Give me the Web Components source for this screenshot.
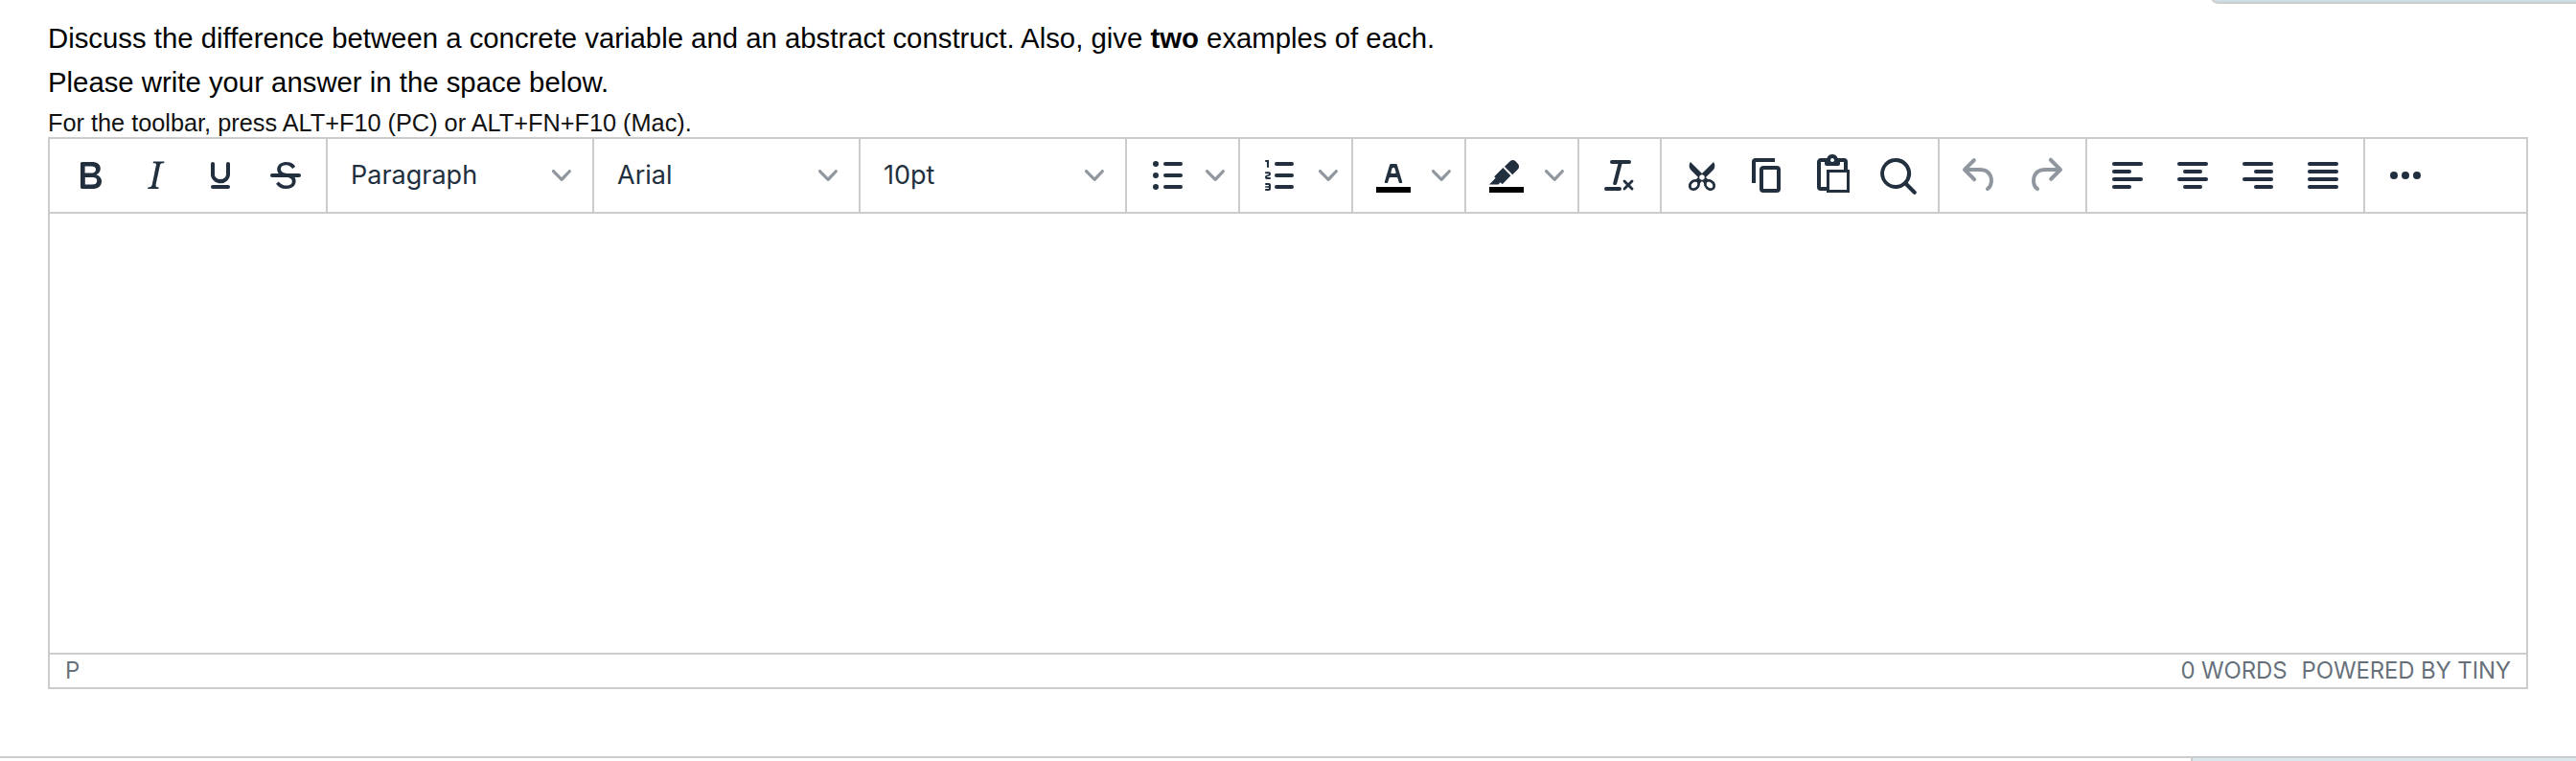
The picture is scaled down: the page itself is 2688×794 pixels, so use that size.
<!DOCTYPE html>
<html lang="en">
<head>
<meta charset="utf-8">
<title>Essay question</title>
<style>
html,body{margin:0;height:794px;overflow:hidden;background:#fff}
</style>
</head>
<body>
<question-page></question-page>
<script>
const rows = (list) => list.map(([x, y, w]) => `<rect x="${x}" y="${y}" width="${w}" height="2" rx="1"/>`).join('');
const ICONS = {
  bold: '<path d="M7.8 19c-.3 0-.5 0-.6-.2l-.2-.5V5.7c0-.2 0-.4.2-.5l.6-.2h5c1.5 0 2.7.3 3.5 1 .7.6 1.1 1.4 1.1 2.5a3 3 0 0 1-.6 1.9c-.4.6-1 1-1.6 1.2.4.1.9.3 1.3.6s.8.7 1 1.2c.4.4.5 1 .5 1.6 0 1.3-.4 2.3-1.3 3-.8.7-2.1 1-3.8 1H7.8Zm5-8.3c.6 0 1.2-.1 1.6-.5.4-.3.6-.7.6-1.3 0-1.1-.8-1.7-2.3-1.7H9.3v3.5h3.4Zm.5 6c.7 0 1.3-.1 1.7-.4.4-.4.6-.9.6-1.5s-.2-1-.7-1.4c-.4-.3-1-.4-2-.4H9.4v3.8h4Z" fill-rule="evenodd"/>',
  italic: '<path d="m16.7 4.7-.1.9h-.3c-.6 0-1 0-1.4.3-.3.3-.4.6-.5 1.1l-2.1 9.8v.6c0 .5.4.8 1.4.8h.2l-.2.8H8l.2-.8h.2c1.1 0 1.8-.5 2-1.5l2-9.8.1-.5c0-.6-.4-.8-1.4-.8h-.3l.2-.9h5.8Z"/>',
  underline: '<path d="M16 5c.6 0 1 .4 1 1v5.5a4 4 0 0 1-.4 1.8l-1 1.4a5.3 5.3 0 0 1-5.5 1 5 5 0 0 1-1.6-1c-.5-.4-.8-.9-1.1-1.4a4 4 0 0 1-.4-1.8V6c0-.6.4-1 1-1s1 .4 1 1v5.5c0 .3 0 .6.2 1l.6.7a3.3 3.3 0 0 0 2.2.8 3.4 3.4 0 0 0 2.2-.8c.3-.2.4-.5.6-.8l.2-.9V6c0-.6.4-1 1-1ZM8 17h8c.6 0 1 .4 1 1s-.4 1-1 1H8a1 1 0 0 1 0-2Z"/>',
  strike: '<path d="M15.6 8.5c-.5-.7-1-1.1-1.3-1.3-.6-.4-1.3-.6-2-.6-2.7 0-2.8 1.7-2.8 2.1 0 1.6 1.8 2 3.2 2.3 4.4.9 4.6 2.8 4.6 3.9 0 1.4-.7 4.1-5 4.1A6.2 6.2 0 0 1 7 16.4l1.5-1.1c.4.6 1.6 2 3.7 2 1.6 0 2.5-.4 3-1.2.4-.8.3-2-.8-2.6-.7-.4-1.6-.7-2.9-1-1-.2-3.9-.8-3.9-3.6C7.6 6 10.3 5 12.4 5c2.9 0 4.2 1.6 4.7 2.4l-1.5 1.1Z"/><path d="M5 11h14a1 1 0 0 1 0 2H5a1 1 0 0 1 0-2Z"/>',
  bullets: rows([[10,5,10],[10,11,10],[10,17,10]]) + '<circle cx="6" cy="6" r="1.5"/><circle cx="6" cy="12" r="1.5"/><circle cx="6" cy="18" r="1.5"/>',
  numbers: rows([[9,5,10],[9,11,10],[9,17,10]]) + '<path d="M6 4v3.5c0 .3-.2.5-.5.5a.5.5 0 0 1-.5-.5V5h-.5a.5.5 0 0 1 0-1H6Zm-1 8.8.2.2h1.3c.3 0 .5.2.5.5s-.2.5-.5.5H4.9a1 1 0 0 1-.9-1V13c0-.4.3-.8.6-1l1.2-.4.2-.3a.2.2 0 0 0-.2-.2H4.5a.5.5 0 0 1-.5-.5c0-.3.2-.5.5-.5h1.6c.5 0 .9.4.9 1v.1c0 .4-.3.8-.6 1l-1.2.4-.2.3ZM7 17v2c0 .6-.4 1-1 1H4.5a.5.5 0 0 1 0-1h1.2c.2 0 .3-.1.3-.3 0-.2-.1-.3-.3-.3H4.4a.4.4 0 1 1 0-.8h1.3c.2 0 .3-.1.3-.3 0-.2-.1-.3-.3-.3H4.5a.5.5 0 1 1 0-1H6c.6 0 1 .4 1 1Z"/>',
  color: '<path d="M3 18h18v3H3z" fill="#000"/><path d="M8.7 16h-.8a.5.5 0 0 1-.5-.6l2.7-9c.1-.3.3-.4.5-.4h2.8c.2 0 .4.1.5.4l2.7 9a.5.5 0 0 1-.5.6h-.8a.5.5 0 0 1-.4-.4l-.7-2.2c0-.3-.3-.4-.5-.4h-3.4c-.2 0-.4.1-.5.4l-.7 2.2c0 .3-.2.4-.4.4Zm2.6-7.6-.6 2a.5.5 0 0 0 .5.6h1.6a.5.5 0 0 0 .5-.6l-.6-2c0-.3-.3-.4-.5-.4h-.4c-.2 0-.4.1-.5.4Z" fill-rule="evenodd"/>',
  highlight: '<path d="M3 18h18v3H3z" fill="#000"/><path d="M7.7 16.7H3l3.3-3.3-.7-.8L10.2 8l4 4.1-4 4.2c-.2.2-.6.2-.8 0l-.6-.7-1.1 1.1Zm5-7.5L11 7.4l3-2.9a2 2 0 0 1 2.6 0L18 6c.7.7.7 2 0 2.7l-2.9 2.9-1.8-1.8-.5-.6Z"/>',
  clear: '<path d="M13.2 6a1 1 0 0 1 0 .2l-2.6 10a1 1 0 0 1-1 .8h-.2a.8.8 0 0 1-.8-1l2.6-10H8a1 1 0 1 1 0-2h9a1 1 0 0 1 0 2h-3.8ZM5 18h7a1 1 0 0 1 0 2H5a1 1 0 0 1 0-2Zm13 1.5L16.5 18 15 19.5a.7.7 0 0 1-1-1l1.5-1.5-1.5-1.5a.7.7 0 0 1 1-1l1.5 1.5 1.5-1.5a.7.7 0 0 1 1 1L17.5 17l1.5 1.5a.7.7 0 0 1-1 1Z"/>',
  cut: '<path fill-rule="evenodd" d="M18 15c.6.7 1 1.4 1 2.3 0 .8-.2 1.5-.7 2l-.8.5-1 .2c-.4 0-.8 0-1.2-.3a3.9 3.9 0 0 1-2.1-2.2c-.2-.5-.3-1-.2-1.5l-1-1-1 1c0 .5 0 1-.2 1.5-.1.5-.4 1-.9 1.4-.3.4-.7.6-1.2.8l-1.2.3c-.4 0-.7 0-1-.2-.3 0-.6-.3-.8-.5-.5-.5-.8-1.2-.7-2 0-.9.4-1.6 1-2.2A3.7 3.7 0 0 1 8.6 14H9l1-1-4-4-.5-1a3.3 3.3 0 0 1 0-2c0-.4.3-.7.5-1l6 6 6-6 .5 1a3.3 3.3 0 0 1 0 2c0 .4-.3.7-.5 1l-4 4 1 1h.5c.4 0 .8 0 1.2.3.5.2.9.4 1.2.8Zm-8.5 2.2.1-.4v-.7a1 1 0 0 0-.2-.5 1 1 0 0 0-.4-.2 1.6 1.6 0 0 0-.8 0 2.6 2.6 0 0 0-.8.3 2.5 2.5 0 0 0-.9 1.1l-.1.4v.7l.2.5.5.2h.7a2.5 2.5 0 0 0 .8-.3 2.8 2.8 0 0 0 .9-1.1Zm2.5-2.8c.4 0 .7-.1 1-.4.3-.3.4-.6.4-1s-.1-.7-.4-1c-.3-.3-.6-.4-1-.4s-.7.1-1 .4c-.3.3-.4.6-.4 1s.1.7.4 1c.3.3.6.4 1 .4Zm5.4 4 .2-.5v-.7a2.6 2.6 0 0 0-.3-.8 2.4 2.4 0 0 0-.7-.7 2.5 2.5 0 0 0-.8-.3 1.5 1.5 0 0 0-.8 0 1 1 0 0 0-.4.2 1 1 0 0 0-.2.5 1.5 1.5 0 0 0 0 .7v.4l.3.4.3.4a2.8 2.8 0 0 0 .8.5l.4.1h.7l.5-.2Z"/>',
  copy: '<path d="M16 3H6a2 2 0 0 0-2 2v11h2V5h10V3Zm1 4a2 2 0 0 1 2 2v10a2 2 0 0 1-2 2h-7a2 2 0 0 1-2-2V9c0-1.2.9-2 2-2h7Zm0 12V9h-7v10h7Z" fill-rule="evenodd"/>',
  paste: '<path d="M18 9V5h-2v1c0 .6-.4 1-1 1H9a1 1 0 0 1-1-1V5H6v13h3V9h9ZM9 20H6a2 2 0 0 1-2-2V5c0-1.1.9-2 2-2h3.2A3 3 0 0 1 12 1a3 3 0 0 1 2.8 2H18a2 2 0 0 1 2 2v4h1v12H9v-1Zm1.5-9.5v9h9v-9h-9ZM12 3a1 1 0 0 0-1 1c0 .5.4 1 1 1s1-.5 1-1-.4-1-1-1Z" fill-rule="evenodd"/>',
  search: '<path d="M16 17.3a8 8 0 1 1 1.4-1.4l4.3 4.4a1 1 0 0 1-1.4 1.4l-4.4-4.3Zm-5-.3a6 6 0 1 0 0-12 6 6 0 0 0 0 12Z" fill-rule="evenodd"/>',
  undo: '<path d="M6.4 8H12c3.7 0 6.2 2 6.8 5.1.6 2.7-.4 5.6-2.3 6.8a1 1 0 0 1-1-1.8c1.1-.6 1.8-2.7 1.4-4.6-.5-2.1-2.1-3.5-4.9-3.5H6.4l3.3 3.3a1 1 0 1 1-1.4 1.4l-5-5a1 1 0 0 1 0-1.4l5-5a1 1 0 0 1 1.4 1.4L6.4 8Z"/>',
  redo: '<path d="M17.6 10H12c-2.8 0-4.4 1.4-4.9 3.5-.4 2 .3 4 1.4 4.6a1 1 0 1 1-1 1.8c-2-1.2-2.9-4.1-2.3-6.8.6-3 3-5.1 6.8-5.1h5.6l-3.3-3.3a1 1 0 1 1 1.4-1.4l5 5a1 1 0 0 1 0 1.4l-5 5a1 1 0 0 1-1.4-1.4l3.3-3.3Z"/>',
  left: rows([[4,5,16],[4,9,10],[4,13,16],[4,17,10]]),
  center: rows([[4,5,16],[7,9,10],[4,13,16],[7,17,10]]),
  right: rows([[4,5,16],[10,9,10],[4,13,16],[10,17,10]]),
  justify: rows([[4,5,16],[4,9,16],[4,13,16],[4,17,16]]),
  more: '<circle cx="6" cy="12" r="2"/><circle cx="12" cy="12" r="2"/><circle cx="18" cy="12" r="2"/>'
};

function define(name, render) {
  customElements.define(name, class extends HTMLElement {
    connectedCallback() {
      if (this.shadowRoot) return;
      this.attachShadow({ mode: 'open' }).innerHTML = render(this);
    }
  });
}

define('tool-button', (el) => `
  <style>
    :host{display:flex;align-items:center;justify-content:center;width:68px;height:68px;flex:none}
    svg{display:block;width:48px;height:48px;fill:#222f3e}
    :host([disabled]) svg{fill:rgba(34,47,62,.5)}
  </style>
  <svg viewBox="0 0 24 24">${ICONS[el.getAttribute('icon')]}</svg>`);

define('drop-chevron', () => `
  <style>
    :host{display:flex;align-items:center;justify-content:center;width:32px;height:68px;flex:none}
    svg{display:block;width:20px;height:20px;fill:rgba(34,47,62,.5)}
  </style>
  <svg viewBox="0 0 10 10"><path d="M8.7 2.2c.3-.3.8-.3 1 0 .4.4.4.9 0 1.2L5.7 7.8c-.3.3-.9.3-1.2 0L.2 3.4a.8.8 0 0 1 0-1.2c.3-.3.8-.3 1.1 0L5 6l3.7-3.8Z"/></svg>`);

define('tool-select', () => `
  <style>
    :host{display:flex;align-items:center;justify-content:space-between;width:260px;height:68px;box-sizing:border-box;
      padding:0 8px 0 16px;font:27px/48px Inter,sans-serif;color:#222f3e}
  </style>
  <span><slot></slot></span><drop-chevron></drop-chevron>`);

define('tool-group', () => `
  <style>
    :host{display:flex;align-items:center;height:76px;padding:0 8px;border-right:2px solid #ccc;flex:none}
    :host(:last-child){border-right:0}
  </style>
  <slot></slot>`);

define('editor-toolbar', () => `
  <style>:host{display:flex;height:76px;border-bottom:2px solid #ccc;flex:none}</style>
  <tool-group><tool-button icon="bold"></tool-button><tool-button icon="italic"></tool-button><tool-button icon="underline"></tool-button><tool-button icon="strike"></tool-button></tool-group>
  <tool-group><tool-select>Paragraph</tool-select></tool-group>
  <tool-group><tool-select>Arial</tool-select></tool-group>
  <tool-group><tool-select>10pt</tool-select></tool-group>
  ${['bullets', 'numbers', 'color', 'highlight'].map((i) => `<tool-group><tool-button icon="${i}"></tool-button><drop-chevron></drop-chevron></tool-group>`).join('')}
  <tool-group><tool-button icon="clear"></tool-button></tool-group>
  <tool-group><tool-button icon="cut"></tool-button><tool-button icon="copy"></tool-button><tool-button icon="paste"></tool-button><tool-button icon="search"></tool-button></tool-group>
  <tool-group><tool-button icon="undo" disabled></tool-button><tool-button icon="redo" disabled></tool-button></tool-group>
  <tool-group><tool-button icon="left"></tool-button><tool-button icon="center"></tool-button><tool-button icon="right"></tool-button><tool-button icon="justify"></tool-button></tool-group>
  <tool-group><tool-button icon="more"></tool-button></tool-group>`);

define('editor-status', () => `
  <style>
    :host{display:flex;align-items:center;height:34px;border-top:2px solid #ccc;padding:0 16px;
      font:24px/34px Inter,sans-serif;letter-spacing:-.15px;color:rgba(34,47,62,.7);flex:none}
    .path{flex:1}
    .words{margin-right:15px}
  </style>
  <span class="path">P</span><span class="words">0 WORDS</span><span class="brand">POWERED BY TINY</span>`);

define('rich-editor', () => `
  <style>
    :host{display:flex;flex-direction:column;box-sizing:border-box;width:2588px;height:576px;border:2px solid #ccc;flex:none}
    .body{flex:1}
  </style>
  <editor-toolbar></editor-toolbar><div class="body"></div><editor-status></editor-status>`);

define('panel-tab', () => `
  <style>
    :host{display:block;box-sizing:border-box;margin-left:auto;border:0 solid #ccc;flex:none}
    :host([edge=top]){width:380px;height:4px;border-bottom-width:2px;border-left-width:2px;border-bottom-left-radius:8px 4px;background:#cddfe6}
    :host([edge=bottom]){width:402px;height:3px;border-left-width:2px;background:#d8e8ed}
  </style>`);

define('question-page', () => `
  <style>
    :host{display:flex;flex-direction:column;height:794px;font-family:"Liberation Sans",Arial,sans-serif;color:#000}
    .content{display:flex;flex-direction:column;height:785px;padding:0 50px;box-sizing:border-box;flex:none}
    p{margin:0;white-space:nowrap;font-size:29.33px;line-height:46px}
    .first{margin-top:13px}
    .hint{font-size:25.3px;line-height:30px;height:30px;margin-top:4px;color:#111}
    .rule{height:2px;background:#ccc;flex:none}
  </style>
  <panel-tab edge="top"></panel-tab>
  <div class="content">
    <p class="first">Discuss the difference between a concrete variable and an abstract construct. Also, give <b>two</b> examples of each.</p>
    <p class="second">Please write your answer in the space below.</p>
    <p class="hint">For the toolbar, press ALT+F10 (PC) or ALT+FN+F10 (Mac).</p>
    <rich-editor></rich-editor>
  </div>
  <div class="rule"></div>
  <panel-tab edge="bottom"></panel-tab>`);
</script>
</body>
</html>
